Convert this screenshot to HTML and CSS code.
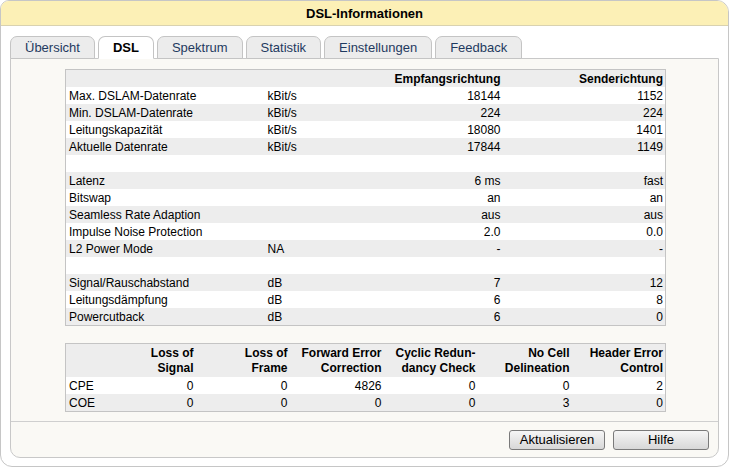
FILE: index.html
```html
<!DOCTYPE html>
<html lang="de">
<head>
<meta charset="utf-8">
<title>DSL-Informationen</title>
<link rel="stylesheet" href="styles.css">
</head>
<body>
<div class="frame">
  <div class="titlebar">DSL-Informationen</div>
  <div class="main">
    <ul class="tabs">
      <li class="tab">Übersicht</li>
      <li class="tab active">DSL</li>
      <li class="tab">Spektrum</li>
      <li class="tab">Statistik</li>
      <li class="tab">Einstellungen</li>
      <li class="tab">Feedback</li>
    </ul>
    <div class="panel">
      <div class="content">
        <table class="grid info">
          <colgroup>
            <col class="c-label"><col class="c-unit"><col class="c-down"><col class="c-up">
          </colgroup>
          <tr class="head"><th></th><th></th><th class="num">Empfangsrichtung</th><th class="num">Senderichtung</th></tr>
          <tr><td>Max. DSLAM-Datenrate</td><td>kBit/s</td><td class="num">18144</td><td class="num">1152</td></tr>
          <tr><td>Min. DSLAM-Datenrate</td><td>kBit/s</td><td class="num">224</td><td class="num">224</td></tr>
          <tr><td>Leitungskapazität</td><td>kBit/s</td><td class="num">18080</td><td class="num">1401</td></tr>
          <tr><td>Aktuelle Datenrate</td><td>kBit/s</td><td class="num">17844</td><td class="num">1149</td></tr>
          <tr><td>&nbsp;</td><td></td><td></td><td></td></tr>
          <tr><td>Latenz</td><td></td><td class="num">6 ms</td><td class="num">fast</td></tr>
          <tr><td>Bitswap</td><td></td><td class="num">an</td><td class="num">an</td></tr>
          <tr><td>Seamless Rate Adaption</td><td></td><td class="num">aus</td><td class="num">aus</td></tr>
          <tr><td>Impulse Noise Protection</td><td></td><td class="num">2.0</td><td class="num">0.0</td></tr>
          <tr><td>L2 Power Mode</td><td>NA</td><td class="num">-</td><td class="num">-</td></tr>
          <tr><td>&nbsp;</td><td></td><td></td><td></td></tr>
          <tr><td>Signal/Rauschabstand</td><td>dB</td><td class="num">7</td><td class="num">12</td></tr>
          <tr><td>Leitungsdämpfung</td><td>dB</td><td class="num">6</td><td class="num">8</td></tr>
          <tr><td>Powercutback</td><td>dB</td><td class="num">6</td><td class="num">0</td></tr>
        </table>

        <table class="grid errors">
          <colgroup>
            <col class="e-label"><col class="e-col"><col class="e-col"><col class="e-col"><col class="e-col"><col class="e-col"><col class="e-col">
          </colgroup>
          <tr class="head">
            <th></th>
            <th class="num">Loss of<br>Signal</th>
            <th class="num">Loss of<br>Frame</th>
            <th class="num">Forward Error<br>Correction</th>
            <th class="num">Cyclic Redun-<br>dancy Check</th>
            <th class="num">No Cell<br>Delineation</th>
            <th class="num">Header Error<br>Control</th>
          </tr>
          <tr><td>CPE</td><td class="num">0</td><td class="num">0</td><td class="num">4826</td><td class="num">0</td><td class="num">0</td><td class="num">2</td></tr>
          <tr><td>COE</td><td class="num">0</td><td class="num">0</td><td class="num">0</td><td class="num">0</td><td class="num">3</td><td class="num">0</td></tr>
        </table>
      </div>
      <div class="buttons">
        <button class="btn" type="button">Aktualisieren</button>
        <button class="btn" type="button">Hilfe</button>
      </div>
    </div>
  </div>
</div>
</body>
</html>
```

FILE: styles.css
```css
* { box-sizing: border-box; }

html, body {
  margin: 0;
  padding: 0;
  background: #ffffff;
}

body {
  font-family: "Liberation Sans", Arial, sans-serif;
  color: #000;
}

.frame {
  width: 729px;
  height: 467px;
  border: 1px solid #c6c6c6;
  border-radius: 9px 12px 12px 12px;
  overflow: hidden;
  background: #ffffff;
}

.titlebar {
  height: 25px;
  background: #fcf0b6;
  border-bottom: 1px solid #d9d2b0;
  font-size: 13px;
  font-weight: bold;
  line-height: 25px;
  text-align: center;
  color: #000;
}

.main {
  padding: 10px 9px 0 9px;
}

.tabs {
  list-style: none;
  margin: 0 0 -1px 0;
  padding: 0;
  display: flex;
  gap: 3px;
  position: relative;
  z-index: 1;
}

.tab {
  height: 23px;
  padding: 0 14px;
  border: 1px solid #c4c4c4;
  border-radius: 7px 7px 0 0;
  background: #ececec;
  color: #1f3a60;
  font-size: 13px;
  line-height: 21px;
}

.tab.active {
  background: #ffffff;
  border-bottom-color: #ffffff;
  color: #000;
  font-weight: bold;
}

.panel {
  height: 400px;
  border: 1px solid #c8c8c8;
  border-radius: 0 0 10px 10px;
  background: #faf9f5;
  display: flex;
  flex-direction: column;
}

.content {
  flex: 1;
  padding-top: 10px;
  border-bottom: 1px solid #cfcfcf;
}

.grid {
  width: 600px;
  margin: 0 53px 0 54px;
  border-collapse: collapse;
  border: 1px solid #c4c4c4;
  table-layout: fixed;
  font-size: 12px;
  line-height: 15px;
}

.grid td, .grid th {
  padding: 2px 2px 0 3px;
  white-space: nowrap;
  text-align: left;
  font-weight: normal;
  vertical-align: middle;
}

.grid th {
  font-weight: bold;
}

.grid .num {
  text-align: right;
}

.grid tr { background: #ffffff; }
.grid tr:nth-child(odd) { background: #ededed; }

.info tr { height: 17px; }
.c-label { width: 199px; }
.c-unit { width: 110px; }
.c-down { width: 128px; }
.c-up { width: 163px; }

.errors { margin-top: 17px; }
.errors tr { height: 17px; }
.errors tr.head { height: 33px; }
.errors tr.head th { vertical-align: bottom; padding-bottom: 1px; }
.e-label { width: 36px; }
.e-col { width: 94px; }

.buttons {
  height: 35px;
  display: flex;
  justify-content: flex-end;
  gap: 8px;
  padding: 8px 9px 0 0;
}

.btn {
  width: 96px;
  height: 20px;
  padding: 0;
  border: 1px solid #7a7a7a;
  border-radius: 3px;
  background: linear-gradient(#f6f6f6, #e6e6e6 50%, #d8d8d8);
  font-family: "Liberation Sans", Arial, sans-serif;
  font-size: 13px;
  line-height: 18px;
  color: #000;
}
```
